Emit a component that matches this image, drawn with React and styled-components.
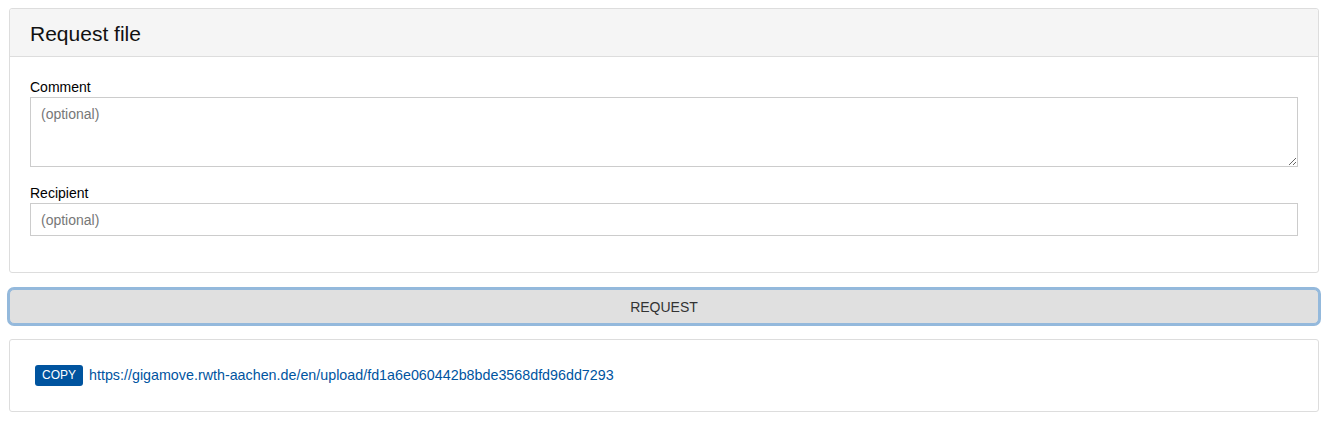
import React from "react";
import styled, { createGlobalStyle } from "styled-components";

const GlobalStyle = createGlobalStyle`
  body {
    margin: 0;
    background: #fff;
    font-family: "Liberation Sans", Arial, sans-serif;
    font-size: 14px;
    color: #000;
  }
`;

const Page = styled.div`
  width: 1310px;
  padding: 8px 11px 0 9px;
  display: flex;
  flex-direction: column;
`;

const Panel = styled.div`
  border: 1px solid #dddddd;
  border-radius: 3px;
  background: #fff;
`;

const PanelHeader = styled.div`
  background: #f5f5f5;
  border-bottom: 1px solid #dddddd;
  height: 48px;
  padding: 2px 20px 0;
  box-sizing: border-box;
  display: flex;
  align-items: center;
  border-radius: 3px 3px 0 0;
`;

const Title = styled.h3`
  margin: 0;
  font-size: 21px;
  font-weight: normal;
  color: #111;
`;

const PanelBody = styled.div`
  padding: ${({ $pad }) => $pad};
`;

const Field = styled.div`
  margin-bottom: ${({ $last }) => ($last ? 15 : 16)}px;
`;

const Label = styled.label`
  display: block;
  line-height: 20px;
  font-size: 14px;
  color: #000;
`;

const TextArea = styled.textarea`
  display: block;
  box-sizing: border-box;
  width: 100%;
  height: 70px;
  border: 1px solid #cccccc;
  padding: 8px 10px;
  font-family: inherit;
  font-size: 14px;
  color: #555;
  resize: vertical;
  margin: 0;
  &::placeholder {
    color: #777;
  }
`;

const Input = styled.input`
  display: block;
  box-sizing: border-box;
  width: 100%;
  height: 33px;
  border: 1px solid #cccccc;
  padding: 0 10px;
  font-family: inherit;
  font-size: 14px;
  color: #555;
  margin: 0;
  &::placeholder {
    color: #777;
  }
`;

const Button = styled.button`
  display: block;
  width: 1310px;
  height: 35px;
  margin: 16px 0 15px;
  background: #e0e0e0;
  border: 1px solid #94b9dc;
  border-radius: 5px;
  box-shadow: 0 0 0 2px #94b9dc;
  font-family: inherit;
  font-size: 14px;
  color: #333;
  text-transform: uppercase;
  cursor: pointer;
`;

const LinkRow = styled.div`
  display: flex;
  align-items: center;
  gap: 6px;
  line-height: 22px;
`;

const CopyBadge = styled.button`
  background: #00549f;
  color: #fff;
  border: none;
  border-radius: 3px;
  height: 21px;
  padding: 0 7px;
  font-family: inherit;
  font-size: 12px;
  line-height: 21px;
  cursor: pointer;
`;

const UrlLink = styled.a`
  color: #00549f;
  text-decoration: none;
  font-size: 14.3px;
`;

export default function App() {
  const url =
    "https://gigamove.rwth-aachen.de/en/upload/fd1a6e060442b8bde3568dfd96dd7293";
  return (
    <>
      <GlobalStyle />
      <Page>
        <Panel>
          <PanelHeader>
            <Title>Request file</Title>
          </PanelHeader>
          <PanelBody $pad="20px 20px 21px">
            <Field>
              <Label>Comment</Label>
              <TextArea placeholder="(optional)" />
            </Field>
            <Field $last>
              <Label>Recipient</Label>
              <Input placeholder="(optional)" />
            </Field>
          </PanelBody>
        </Panel>
        <Button>Request</Button>
        <Panel>
          <PanelBody $pad="24px 25px 25px">
            <LinkRow>
              <CopyBadge>COPY</CopyBadge>
              <UrlLink href="#">{url}</UrlLink>
            </LinkRow>
          </PanelBody>
        </Panel>
      </Page>
    </>
  );
}
